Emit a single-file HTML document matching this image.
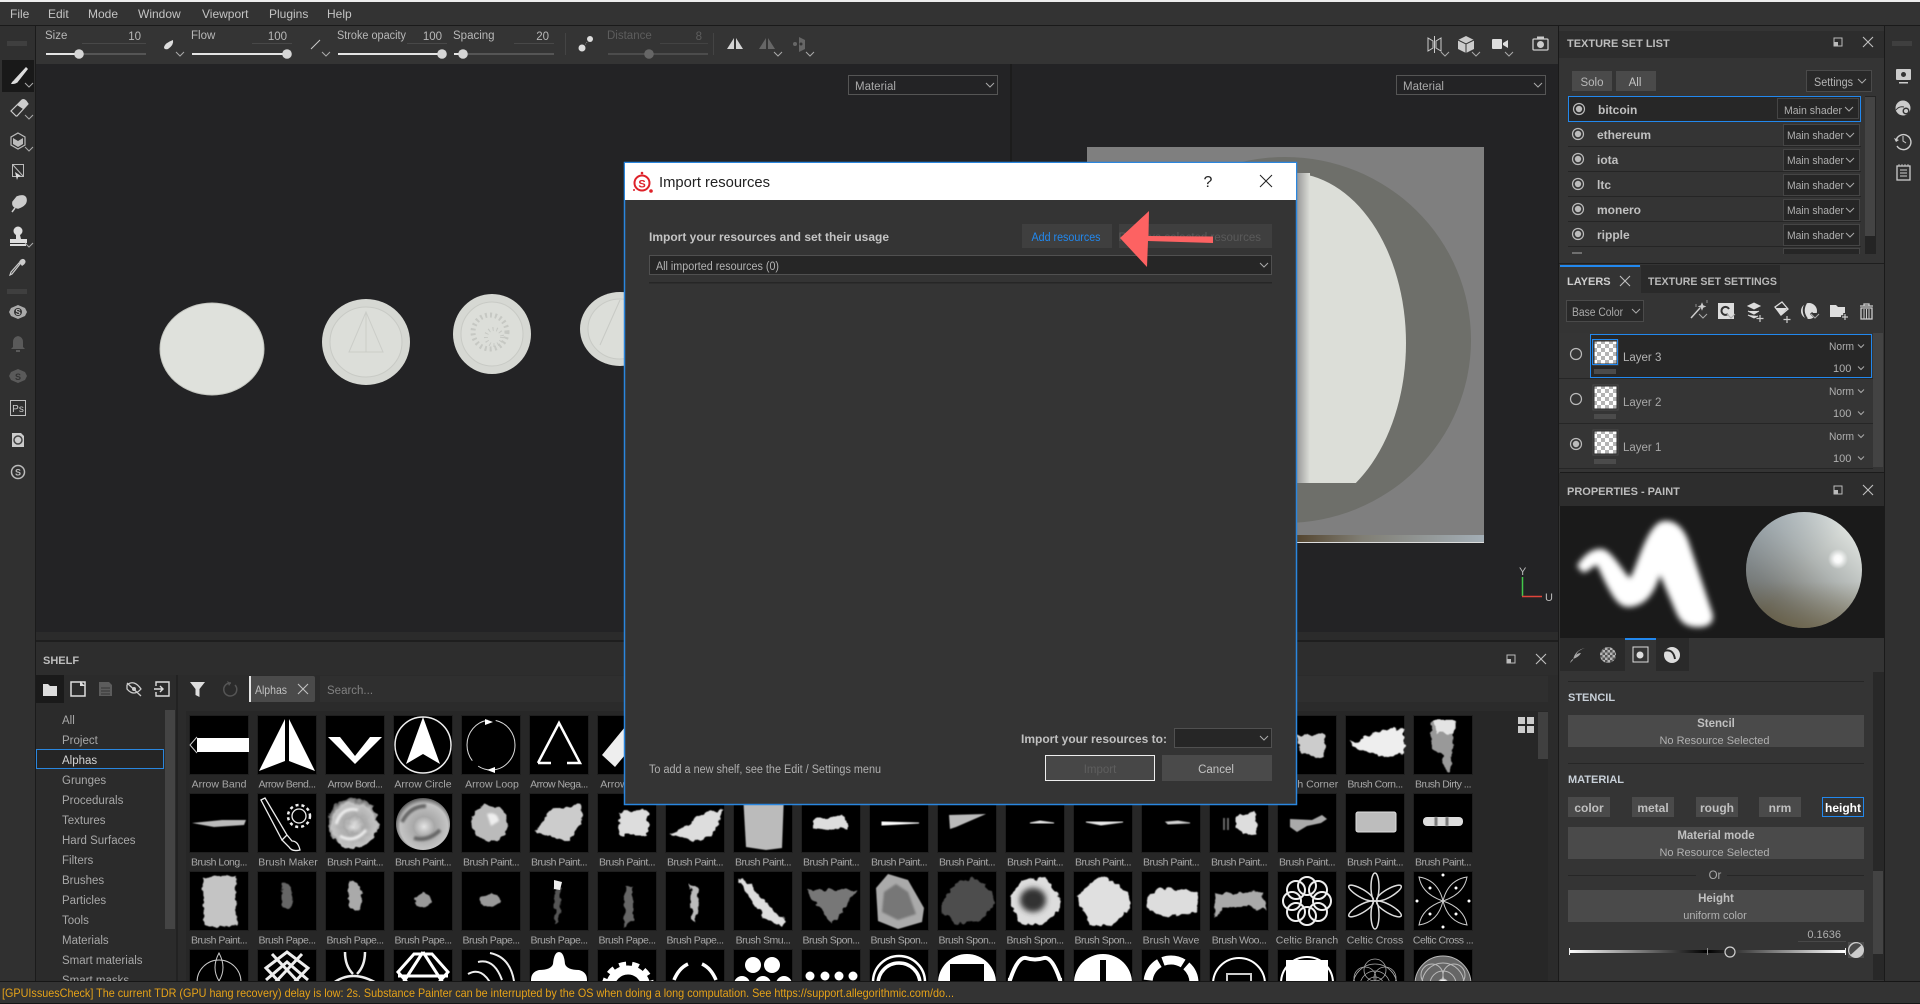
<!DOCTYPE html>
<html><head><meta charset="utf-8"><title>Import resources</title>
<style>
html,body{margin:0;padding:0;background:#232325;width:1920px;height:1004px;overflow:hidden}
svg{display:block}
text{font-family:"Liberation Sans",sans-serif;font-size:11px;fill:#b4b4b4}
.m{font-size:12px;fill:#c4c4c4}
.tb{font-size:11.5px;fill:#b8b8b8}
.h{font-size:11px;font-weight:bold;fill:#bdbdbd}
.b{font-size:12px;font-weight:bold;fill:#c0c0c0}
.l{font-size:10.5px;fill:#a8a8a8;text-anchor:middle}
.t{letter-spacing:-.5px}
.c{font-size:11.5px;fill:#a8a8a8}
.mid{text-anchor:middle}
.end{text-anchor:end}
.ms{font-size:11px;fill:#b0b0b0}
.w{fill:#fff}
</style></head><body>
<svg width="1920" height="1004" viewBox="0 0 1920 1004" xmlns="http://www.w3.org/2000/svg">
<defs>
<path id="ch" d="M-4-2L0 2L4-2" fill="none" stroke="#aaa" stroke-width="1"/>
<path id="ch2" d="M-3-1.500L0 1.500L3-1.500" fill="none" stroke="#aaa" stroke-width="1"/>
<path id="x" d="M-5-5L5 5M5-5L-5 5" fill="none" stroke="#c0c0c0" stroke-width="1.100"/>
<g id="dock"><rect x="-4" y="-4" width="8" height="8" fill="none" stroke="#bbb"/><rect x="-4" y="0" width="4" height="4" fill="#bbb"/></g>
<g id="radio"><circle r="5.500" fill="none" stroke="#bbb" stroke-width="1.200"/><circle r="3.200" fill="#bbb"/></g>
<g id="radio0"><circle r="5.500" fill="none" stroke="#bbb" stroke-width="1.200"/></g>
<g id="shader"><rect x=".5" y=".5" width="76" height="21" fill="#262626" stroke="#454545"/><text x="4" y="15" class="ms" textLength="57" lengthAdjust="spacingAndGlyphs">Main shader</text><use href="#ch" x="67" y="11"/></g>
<pattern id="chk" width="8" height="8" patternUnits="userSpaceOnUse"><rect width="8" height="8" fill="#fff"/><rect width="4" height="4" fill="#b4b4b4"/><rect x="4" y="4" width="4" height="4" fill="#b4b4b4"/></pattern>
<pattern id="chk2" width="5" height="5" patternUnits="userSpaceOnUse"><rect width="5" height="5" fill="#b5b5b5"/><rect width="2.500" height="2.500" fill="#555"/><rect x="2.500" y="2.500" width="2.500" height="2.500" fill="#555"/></pattern>
<g id="lthumb"><rect x="0" y="0" width="25" height="25" fill="#2b2b2b" stroke="#4a4a4a"/><rect x="1.500" y="1.500" width="22" height="22" fill="url(#chk)"/><rect x="1" y="29" width="22" height="5" fill="#4b4b4b"/></g>
<g id="tile"><rect x="-1" y="-1" width="60" height="60" fill="#1f1f1f" stroke="none"/><rect width="58" height="58" fill="#000" stroke="none"/></g>
<filter id="b1" x="-30%" y="-30%" width="160%" height="160%"><feGaussianBlur stdDeviation="1"/></filter>
<filter id="b3" x="-30%" y="-30%" width="160%" height="160%"><feGaussianBlur stdDeviation="3"/></filter>
<filter id="b05" x="-30%" y="-30%" width="160%" height="160%"><feGaussianBlur stdDeviation=".6"/></filter>
<filter id="r" x="-20%" y="-20%" width="140%" height="140%"><feTurbulence type="fractalNoise" baseFrequency=".14" numOctaves="2" seed="3" result="n"/><feDisplacementMap in="SourceGraphic" in2="n" scale="7" xChannelSelector="R" yChannelSelector="G"/><feGaussianBlur stdDeviation=".5"/></filter>
<linearGradient id="sph" x1=".95" y1=".1" x2=".1" y2=".95"><stop offset="0" stop-color="#e6eae6"/><stop offset=".4" stop-color="#b0b5b3"/><stop offset=".75" stop-color="#7a7c78"/><stop offset="1" stop-color="#5c5a50"/></linearGradient>
<linearGradient id="sph2" x1="0" y1="0" x2="0" y2="1"><stop offset=".6" stop-color="#6a5c38" stop-opacity="0"/><stop offset="1" stop-color="#6a5c38" stop-opacity=".55"/></linearGradient>
<linearGradient id="sph3" x1="0" y1="0" x2="1" y2="1"><stop offset="0" stop-color="#8fa0b0" stop-opacity=".55"/><stop offset=".5" stop-color="#8fa0b0" stop-opacity="0"/></linearGradient>
<radialGradient id="hl"><stop offset="0" stop-color="#fff"/><stop offset=".35" stop-color="#fff" stop-opacity=".9"/><stop offset="1" stop-color="#fff" stop-opacity="0"/></radialGradient>
<radialGradient id="blob" cx=".52" cy=".55" r=".55"><stop offset="0" stop-color="#e4e4e4"/><stop offset=".35" stop-color="#a8a8a8"/><stop offset=".8" stop-color="#c4c4c4"/><stop offset="1" stop-color="#555"/></radialGradient>
<linearGradient id="sl"><stop offset="0" stop-color="#fff"/><stop offset=".5" stop-color="#000"/><stop offset="1" stop-color="#fff"/></linearGradient>
<linearGradient id="dg"><stop offset="0" stop-color="#999"/><stop offset="1" stop-color="#dcded8"/></linearGradient>
<linearGradient id="strip"><stop offset="0" stop-color="#54452f"/><stop offset=".35" stop-color="#807e74"/><stop offset="1" stop-color="#a3aeb6"/></linearGradient>
<g id="grip"><path d="M0 0v5M2 0v5M4 0v5M6 0v5M8 0v5M10 0v5M12 0v5M14 0v5M16 0v5M18 0v5" stroke="#4e4e4e" stroke-width="1"/></g>
<clipPath id="cr"><rect x="1297" y="150" width="200" height="333"/></clipPath>
</defs>

<!-- base -->
<rect width="1920" height="1004" fill="#232325"/>
<rect width="1920" height="2" fill="#eee"/>
<rect y="2" width="1920" height="23" fill="#333"/>
<rect y="25" width="1920" height="1" fill="#1a1a1a"/>
<rect y="26" width="1920" height="38" fill="#343434"/>
<rect x="1010" y="64" width="2" height="568" fill="#1c1c1c"/>

<!-- menu -->
<text x="10" y="18" class="m">File</text><text x="48" y="18" class="m">Edit</text><text x="88" y="18" class="m">Mode</text><text x="138" y="18" class="m">Window</text><text x="202" y="18" class="m">Viewport</text><text x="269" y="18" class="m">Plugins</text><text x="327" y="18" class="m">Help</text>

<!-- toolbar sliders -->
<g>
<text x="45" y="39" class="tb">Size</text><text x="141" y="40" class="tb end">10</text><rect x="82" y="43" width="64" height="1" fill="#484848"/>
<rect x="46" y="53" width="100" height="2" fill="#555"/><rect x="46" y="53" width="33" height="2" fill="#e4e4e4"/><circle cx="79" cy="54" r="4.800" fill="#d6d6d6"/>
<path d="M173 40Q174 45 168 49Q164 50 164 47Q165 43 173 40z" fill="#ddd"/><use href="#ch" x="180" y="54"/>
<text x="191" y="39" class="tb">Flow</text><text x="287" y="40" class="tb end">100</text><rect x="252" y="43" width="40" height="1" fill="#484848"/>
<rect x="192" y="53" width="95" height="2" fill="#e4e4e4"/><circle cx="287" cy="54" r="4.800" fill="#d6d6d6"/>
<path d="M311 49l9-9" stroke="#ccc" fill="none"/><use href="#ch" x="326" y="54"/>
<text x="337" y="39" class="tb" textLength="69" lengthAdjust="spacingAndGlyphs">Stroke opacity</text><text x="442" y="40" class="tb end">100</text><rect x="407" y="43" width="40" height="1" fill="#484848"/>
<rect x="338" y="53" width="104" height="2" fill="#e4e4e4"/><circle cx="442" cy="54" r="4.800" fill="#d6d6d6"/>
<text x="453" y="39" class="tb">Spacing</text><text x="549" y="40" class="tb end">20</text><rect x="514" y="43" width="40" height="1" fill="#484848"/>
<rect x="454" y="53" width="100" height="2" fill="#555"/><rect x="454" y="53" width="9" height="2" fill="#e4e4e4"/><circle cx="463" cy="54" r="4.800" fill="#d6d6d6"/>
<rect x="565" y="33" width="1" height="22" fill="#444"/>
<circle cx="590" cy="39" r="3" fill="#ddd"/><circle cx="582" cy="48" r="3.500" fill="#ddd"/><path d="M587 42l-2 3" stroke="#888" stroke-dasharray="1 1"/>
<text x="607" y="39" class="tb" style="fill:#5d5d5d">Distance</text><text x="702" y="40" class="tb end" style="fill:#5d5d5d">8</text><rect x="660" y="43" width="48" height="1" fill="#434343"/>
<rect x="608" y="53" width="100" height="2" fill="#4c4c4c"/><circle cx="649" cy="54" r="4.800" fill="#666"/>
<rect x="713" y="33" width="1" height="22" fill="#444"/>
<path d="M734 38l-7 11h7zM736 38l7 11h-7z" fill="#d5d5d5"/>
<path d="M766 38l-7 11h7zM768 38l7 11h-7z" fill="#666"/><use href="#ch" x="778" y="54"/>
<path d="M799 37l6 3v9l-6 3z" fill="#666"/><circle cx="795" cy="44" r="2" fill="#666"/><circle cx="801" cy="44" r="1.500" fill="#333"/><use href="#ch" x="810" y="54"/>
</g>

<!-- viewport dropdowns -->
<rect x="848.500" y="75.500" width="149" height="19" fill="#232325" stroke="#555"/><text x="855" y="90" class="c" style="fill:#aaa">Material</text><use href="#ch" x="990" y="85"/>
<rect x="1396.500" y="75.500" width="149" height="19" fill="#232325" stroke="#555"/><text x="1403" y="90" class="c" style="fill:#aaa">Material</text><use href="#ch" x="1538" y="85"/>

<!-- viewport right toolbar -->
<g>
<path d="M1428 38v13l5-3V41zM1441 38v13l-5-3V41z" fill="none" stroke="#ccc"/><path d="M1434.500 36v17" stroke="#ccc"/><use href="#ch" x="1445" y="54"/>
<path d="M1466 36l8 4v9l-8 4-8-4v-9z" fill="#ccc"/><path d="M1458 40l8 4 8-4M1466 44v9" stroke="#333" fill="none"/><use href="#ch" x="1476" y="54"/>
<rect x="1492" y="39" width="10" height="10" rx="1" fill="#ddd"/><path d="M1503 43l5-3v8l-5-3z" fill="#ddd"/><use href="#ch" x="1509" y="54"/>
<rect x="1533" y="39" width="15" height="11" rx="1" fill="none" stroke="#ccc" stroke-width="1.300"/><circle cx="1540.500" cy="44.500" r="3.500" fill="#ccc"/><rect x="1537" y="36.500" width="7" height="2.500" fill="#ccc"/>
</g>

<!-- coins -->
<g>
<ellipse cx="212" cy="349" rx="52" ry="46" fill="#dfe1dc"/><ellipse cx="212" cy="349" rx="52" ry="46" fill="none" stroke="#c4c6c0"/>
<ellipse cx="366" cy="342" rx="44" ry="43" fill="#d6d8d3"/><ellipse cx="366" cy="342" rx="36" ry="35" fill="#dcded9" stroke="#c8cac5"/><path d="M366 312l-17 40h34zM366 312v40" fill="none" stroke="#cbcdc8"/>
<ellipse cx="492" cy="334" rx="39" ry="40" fill="#d6d8d3"/><ellipse cx="492" cy="334" rx="31" ry="32" fill="#dcded9" stroke="#c8cac5"/>
<ellipse cx="490" cy="332" rx="17" ry="17" fill="none" stroke="#c6c8c3" stroke-width="5" stroke-dasharray="2 3"/><ellipse cx="494" cy="337" rx="8" ry="8" fill="none" stroke="#c6c8c3" stroke-width="4" stroke-dasharray="1 3"/>
<ellipse cx="620" cy="329" rx="40" ry="37" fill="#d6d8d3"/><ellipse cx="620" cy="329" rx="32" ry="30" fill="#dcded9" stroke="#c8cac5"/><path d="M620 300l-20 45" stroke="#c8cac5" fill="none"/>
</g>

<!-- right render -->
<rect x="1087" y="147" width="397" height="396" fill="#7f7f7f"/>
<ellipse cx="1285" cy="340" rx="186" ry="183" fill="#6e6f6a"/>
<ellipse cx="1290" cy="343" rx="116" ry="170" fill="#dcded8" clip-path="url(#cr)"/>
<rect x="1297" y="173" width="13" height="310" fill="url(#dg)"/>
<rect x="1297" y="535" width="187" height="8" fill="url(#strip)"/>
<rect x="1297" y="542" width="187" height="1" fill="#ddd"/>
<!-- gizmo -->
<path d="M1522.500 577v19" stroke="#43c74a" stroke-width="1.500"/><path d="M1522 596.500h20" stroke="#e0453a" stroke-width="1.500"/>
<text x="1519" y="575" style="font-size:11px;fill:#bbb">Y</text><text x="1545" y="601" style="font-size:11px;fill:#bbb">U</text>

<!-- left toolbar -->
<rect x="0" y="26" width="35" height="955" fill="#303030"/>
<rect x="35" y="26" width="1" height="955" fill="#1b1b1b"/>
<use href="#grip" x="8" y="41"/>
<rect x="2" y="60" width="32" height="32" fill="#191919"/>
<g>
<path d="M26 67L14 80l3 3L28 69z" fill="#ddd"/><path d="M11 84q3-6 6-3q1 3-6 3z" fill="#ddd"/><use href="#ch" x="29" y="85"/>
<path d="M16 116l-5-5 11-11q2-1 4 1l2 3-11 12z" fill="none" stroke="#ccc" stroke-width="1.200"/><path d="M17 105l5-5q2-1 4 1l2 3-5 5z" fill="#ccc"/><use href="#ch" x="29" y="117"/>
<path d="M18 133l7 4v8l-7 4-7-4v-8z" fill="none" stroke="#bbb" stroke-width="1.200"/><path d="M13 138l5 3 5-3v6l-5 3-5-3z" fill="#bbb"/><use href="#ch" x="29" y="149"/>
<rect x="12.500" y="164.500" width="11" height="12" fill="none" stroke="#bbb"/><path d="M13 165l10 11" stroke="#bbb"/><path d="M15 172l6 4-3 1-1 3z" fill="#ddd"/>
<path d="M17 197q8-3 9 2q1 6-8 9q-6-1-5-6zM15 208l-3 4" fill="#ccc" stroke="#ccc" stroke-width="1.500"/>
<circle cx="18" cy="231" r="4.500" fill="#ddd"/><path d="M16 235h4l1 4h6v4H10v-4h6z" fill="#ddd"/><rect x="10" y="244" width="16" height="2" fill="#ddd"/><use href="#ch" x="29" y="245"/>
<path d="M20 264l-8 10-2 1 1-3 8-9z" fill="none" stroke="#ccc" stroke-width="1.200"/><path d="M19 262q3-5 6-2q2 3-3 6z" fill="#ccc"/>
<use href="#grip" x="8" y="289"/>
<path d="M18 305l7 3 2 4-2 4-7 3-7-3-2-4 2-4z" fill="#aaa"/><circle cx="18" cy="312" r="4" fill="#333"/><text x="18" y="315" class="mid" style="font-size:8px;font-weight:bold;fill:#bbb">S</text>
<path d="M18 336q5 1 5 6v5l2 2H11l2-2v-5q0-5 5-6z" fill="#5a5a5a"/><rect x="16" y="350" width="4" height="2" fill="#5a5a5a"/>
<path d="M18 369l7 3 2 4-2 4-7 3-7-3-2-4 2-4z" fill="#5a5a5a"/><text x="18" y="380" class="mid" style="font-size:9px;font-weight:bold;fill:#333">S</text>
<rect x="10.500" y="400.500" width="15" height="15" fill="none" stroke="#c0c0c0"/><text x="18" y="412" class="mid" style="font-size:10px;fill:#ccc">Ps</text>
<path d="M12 433h9l3 3v11H12z" fill="#ccc"/><circle cx="18" cy="440" r="4" fill="none" stroke="#444" stroke-width="1.500"/>
<circle cx="18" cy="472" r="6.500" fill="none" stroke="#bbb" stroke-width="1.500"/><text x="18" y="475.500" class="mid" style="font-size:9px;font-weight:bold;fill:#bbb">S</text>
</g>

<!-- shelf -->
<rect x="36" y="632" width="1522" height="349" fill="#2b2b2b"/>
<rect x="36" y="640" width="1522" height="2" fill="#1e1e1e"/>
<rect x="36" y="642" width="1522" height="33" fill="#2d2d2d"/>
<text x="43" y="664" class="h" style="font-size:11px">SHELF</text>
<use href="#dock" x="1511" y="659"/><use href="#x" x="1541" y="659"/>
<!-- shelf tools -->
<rect x="36" y="675" width="28" height="28" fill="#1a1a1a"/>
<path d="M43 684h5l2 2h7v10H43z" fill="#ddd"/>
<path d="M71 682h14v14H71z" fill="none" stroke="#ddd" stroke-width="1.500"/><path d="M80 681l5 5h-5z" fill="#ddd"/>
<path d="M99 682h10l3 3v11H99z" fill="#5c5c5c"/><path d="M101 688h9M101 691h9M101 694h9" stroke="#333"/>
<path d="M127 685q7-6 14 4q-7 8-14 0z" fill="none" stroke="#ccc" stroke-width="1.300"/><path d="M127 683l14 13" stroke="#ccc" stroke-width="1.300"/><circle cx="134" cy="689" r="2" fill="#ccc"/>
<path d="M156 686v-4h13v14h-13v-4" fill="none" stroke="#ddd" stroke-width="1.400"/><path d="M154 689h9M160 686l3 3-3 3" fill="none" stroke="#ddd" stroke-width="1.400"/>
<rect x="176" y="675" width="2" height="306" fill="#222"/>
<path d="M190 682h15l-5.500 7v8l-4-2v-6z" fill="#ddd"/>
<path d="M235 685a6.500 6.500 0 1 1-4-2" fill="none" stroke="#555" stroke-width="1.500"/><path d="M227 681l4 2-2 3z" fill="#555"/>
<rect x="249" y="676" width="66" height="26" rx="2" fill="#4a4a4a"/><rect x="249" y="676" width="2" height="26" fill="#e5e5e5"/>
<text x="255" y="694" class="c" style="font-size:12px;fill:#c0c0c0" textLength="32" lengthAdjust="spacingAndGlyphs">Alphas</text><use href="#x" x="303" y="689"/>
<rect x="320" y="676" width="1228" height="26" fill="#2f2f2f"/>
<text x="327" y="694" class="c" style="fill:#808080">Search...</text>
<!-- categories -->
<g>
<rect x="36.500" y="749.500" width="127" height="19" fill="#252525" stroke="#2a86de"/>
<text x="62" y="724" class="c">All</text><text x="62" y="744" class="c">Project</text><text x="62" y="764" class="c" style="fill:#d4d4d4">Alphas</text><text x="62" y="784" class="c">Grunges</text><text x="62" y="804" class="c">Procedurals</text><text x="62" y="824" class="c">Textures</text><text x="62" y="844" class="c">Hard Surfaces</text><text x="62" y="864" class="c">Filters</text><text x="62" y="884" class="c">Brushes</text><text x="62" y="904" class="c">Particles</text><text x="62" y="924" class="c">Tools</text><text x="62" y="944" class="c">Materials</text><text x="62" y="964" class="c">Smart materials</text><text x="62" y="984" class="c">Smart masks</text>
</g>
<rect x="165" y="710" width="10" height="219" fill="#444"/>
<rect x="186" y="711" width="1362" height="270" fill="#272727"/>
<rect x="1538" y="712" width="10" height="47" fill="#404040"/>
<path d="M1518 717h7v7h-7zM1527 717h7v7h-7zM1518 726h7v7h-7zM1527 726h7v7h-7z" fill="#ccc"/>

<!-- thumbs row 0 -->
<g transform="translate(190,716)"><use href="#tile"/><rect x="7" y="22" width="52" height="14" class="w"/><path d="M7 21l-7 8 7 8" fill="none" stroke="#ccc"/></g>
<g transform="translate(258,716)"><use href="#tile"/><path d="M27 3L1 55l26-10zM31 3l26 52-26-10z" class="w"/></g>
<g transform="translate(326,716)"><use href="#tile"/><path d="M2 21h12l15 19 15-19h12L29 48z" class="w"/></g>
<g transform="translate(394,716)"><use href="#tile"/><ellipse cx="29" cy="29" rx="28" ry="28" fill="none" stroke="#eee" stroke-width="1.500"/><path d="M29 1L12 48l17-10 17 10z" class="w"/></g>
<g transform="translate(462,716)"><use href="#tile"/><ellipse cx="29" cy="29" rx="24" ry="25" fill="none" stroke="#ddd" stroke-dasharray="52 8"/><path d="M23 3l8 3-8 3zM33 51l-8 3 8 3z" class="w"/></g>
<g transform="translate(530,716)"><use href="#tile"/><path d="M8 47L29 7l21 40H37" fill="none" stroke="#fff" stroke-width="2.500"/><path d="M21 47H8" stroke="#fff" stroke-width="2.500"/></g>
<g transform="translate(598,716)"><use href="#tile"/><path d="M4 39l23-28v28l-10 12z" fill="#eee"/></g>
<g transform="translate(1278,716)"><use href="#tile"/><path d="M19 19l29 0-1 20-6 3-18-4z" fill="#ccc" filter="url(#r)"/></g>
<g transform="translate(1346,716)"><use href="#tile"/><path d="M2 26l12-1 6-5 18-6 20-1v25l-14 1-12 2-8-4-8-3-6-3z" fill="#eee" filter="url(#r)"/></g>
<g transform="translate(1414,716)"><use href="#tile"/><path d="M17 4h25l-3 16-1 14-2 22h-3l-5-16-10-8-1-12z" fill="#999" filter="url(#r)"/><path d="M18 4h23l-2 14-15-1z" fill="#e4e4e4" filter="url(#r)"/></g>
<g>
<text x="219" y="787.500" class="l">Arrow Band</text><text x="287" y="787.500" class="l t">Arrow Bend...</text><text x="355" y="787.500" class="l t">Arrow Bord...</text><text x="423" y="787.500" class="l">Arrow Circle</text><text x="492" y="787.500" class="l">Arrow Loop</text><text x="559" y="787.500" class="l t">Arrow Nega...</text><text x="614" y="787.500" class="l">Arrow</text><text x="1307" y="787.500" class="l">Brush Corner</text><text x="1375" y="787.500" class="l t">Brush Corn...</text><text x="1443" y="787.500" class="l t">Brush Dirty ...</text>
</g>

<!-- thumbs row 1 -->
<g transform="translate(190,794)"><use href="#tile"/><path d="M2 29l30-3 24 0-2 5-30 2z" fill="#bbb" filter="url(#b05)"/></g>
<g transform="translate(258,794)"><use href="#tile"/><path d="M3 6l4-2 22 37-5 5zM24 46l5-5 5 6q6 0 8 9q-8 2-11-3z" fill="none" stroke="#eee" stroke-width="1.300"/><circle cx="41" cy="22" r="7" fill="none" stroke="#eee" stroke-width="1.300"/><circle cx="41" cy="22" r="11" fill="none" stroke="#eee" stroke-width="2.500" stroke-dasharray="3 3"/></g>
<g transform="translate(326,794)"><use href="#tile"/><ellipse cx="27" cy="29" rx="25" ry="25" fill="url(#blob)" filter="url(#r)"/><path d="M10 30q6-18 22-14M14 42q14 8 26-6" fill="none" stroke="#eee" stroke-width="3" filter="url(#b1)"/></g>
<g transform="translate(394,794)"><use href="#tile"/><ellipse cx="29" cy="30" rx="27" ry="26" fill="url(#blob)"/><path d="M8 28q8-16 24-16M20 44q14 4 26-8" fill="none" stroke="#666" stroke-width="4" filter="url(#b1)"/></g>
<g transform="translate(462,794)"><use href="#tile"/><ellipse cx="28" cy="29" rx="18" ry="18" fill="#bbb" filter="url(#r)"/><path d="M25 20q10-3 12 7l-8 5z" fill="#eee" filter="url(#b1)"/></g>
<g transform="translate(530,794)"><use href="#tile"/><path d="M5 38L22 15l28-4 3 14-14 22z" fill="#ccc" filter="url(#r)"/></g>
<g transform="translate(598,794)"><use href="#tile"/><path d="M22 18l28-2v25H20z" fill="#ddd" filter="url(#r)"/></g>
<g transform="translate(666,794)"><use href="#tile"/><path d="M4 41L36 21l22-7-11 27-19 6z" fill="#ddd" filter="url(#r)"/></g>
<g transform="translate(734,794)"><use href="#tile"/><path d="M9 0h41l-2 54-16 2-20-3z" fill="#bbb" filter="url(#b05)"/></g>
<g transform="translate(802,794)"><use href="#tile"/><path d="M12 24l20 0 8-3 6 6v7l-20 2-14-2z" fill="#ddd" filter="url(#r)"/></g>
<g transform="translate(870,794)"><use href="#tile"/><path d="M12 28l37 1-37 2z" class="w" stroke="#fff" filter="url(#b05)"/></g>
<g transform="translate(938,794)"><use href="#tile"/><path d="M11 21l37-1-30 13-6 2z" fill="#bbb" filter="url(#b05)"/></g>
<g transform="translate(1006,794)"><use href="#tile"/><path d="M24 29l10-2 14 2z" fill="#eee" stroke="#ddd" filter="url(#b05)"/></g>
<g transform="translate(1074,794)"><use href="#tile"/><path d="M12 28h37l-22 3z" fill="#eee" stroke="#ddd" filter="url(#b05)"/></g>
<g transform="translate(1142,794)"><use href="#tile"/><path d="M24 28l12-1 12 2-22 1z" fill="#ddd" stroke="#bbb" filter="url(#b05)"/></g>
<g transform="translate(1210,794)"><use href="#tile"/><path d="M26 22l20-3 2 20-16 1-6-8z" fill="#ddd" filter="url(#r)"/><path d="M14 24v12M18 24v12" stroke="#666" stroke-width="2" filter="url(#b05)"/></g>
<g transform="translate(1278,794)"><use href="#tile"/><path d="M12 25l22 1 10-5 5 4-6 4-14 3-10 6-7-5z" fill="#aaa" filter="url(#b05)"/></g>
<g transform="translate(1346,794)"><use href="#tile"/><rect x="10" y="18" width="40" height="20" rx="2" fill="#bdbdbd" stroke="#ddd"/></g>
<g transform="translate(1414,794)"><use href="#tile"/><rect x="9" y="23" width="40" height="9" rx="4" fill="#ddd"/><path d="M22 23v9M33 23v9" stroke="#777" stroke-width="3" filter="url(#b05)"/></g>
<g>
<text x="219" y="865.500" class="l t">Brush Long...</text><text x="288" y="865.500" class="l">Brush Maker</text><text x="355" y="865.500" class="l t">Brush Paint...</text><text x="423" y="865.500" class="l t">Brush Paint...</text><text x="491" y="865.500" class="l t">Brush Paint...</text><text x="559" y="865.500" class="l t">Brush Paint...</text><text x="627" y="865.500" class="l t">Brush Paint...</text><text x="695" y="865.500" class="l t">Brush Paint...</text><text x="763" y="865.500" class="l t">Brush Paint...</text><text x="831" y="865.500" class="l t">Brush Paint...</text><text x="899" y="865.500" class="l t">Brush Paint...</text><text x="967" y="865.500" class="l t">Brush Paint...</text><text x="1035" y="865.500" class="l t">Brush Paint...</text><text x="1103" y="865.500" class="l t">Brush Paint...</text><text x="1171" y="865.500" class="l t">Brush Paint...</text><text x="1239" y="865.500" class="l t">Brush Paint...</text><text x="1307" y="865.500" class="l t">Brush Paint...</text><text x="1375" y="865.500" class="l t">Brush Paint...</text><text x="1443" y="865.500" class="l t">Brush Paint...</text>
</g>

<!-- thumbs row 2 -->
<g transform="translate(190,872)"><use href="#tile"/><path d="M13 5l33-2 1 50-20 2-13-3z" fill="#c4c4c4" filter="url(#r)"/></g>
<g transform="translate(258,872)"><use href="#tile"/><ellipse cx="29" cy="24" rx="6" ry="14" fill="#666" filter="url(#r)"/></g>
<g transform="translate(326,872)"><use href="#tile"/><ellipse cx="29" cy="24" rx="7" ry="16" fill="#aaa" filter="url(#r)"/></g>
<g transform="translate(394,872)"><use href="#tile"/><ellipse cx="29" cy="28" rx="8" ry="7" fill="#999" filter="url(#r)"/></g>
<g transform="translate(462,872)"><use href="#tile"/><ellipse cx="28" cy="28" rx="10" ry="6" fill="#999" filter="url(#r)"/></g>
<g transform="translate(530,872)"><use href="#tile"/><path d="M24 16l8 0-3 34h-5z" fill="#555" filter="url(#r)"/><path d="M24 8l8 2-2 8-6-1z" fill="#eee"/></g>
<g transform="translate(598,872)"><use href="#tile"/><path d="M27 14l8 0 0 35-10 6z" fill="#666" filter="url(#r)"/></g>
<g transform="translate(666,872)"><use href="#tile"/><path d="M24 13l10 3-4 35-5-5z" fill="#bbb" filter="url(#r)"/></g>
<g transform="translate(734,872)"><use href="#tile"/><path d="M5 6l12 8 25 27 11 8-6 5-17-8-13-18z" fill="#ddd" filter="url(#r)"/></g>
<g transform="translate(802,872)"><use href="#tile"/><path d="M4 18h52L30 52z" fill="#777" filter="url(#r)"/></g>
<g transform="translate(870,872)"><use href="#tile"/><path d="M6 16l12-14 20 6 16 28-2 14-24 7-20-8z" fill="#aaa" filter="url(#b05)"/><path d="M14 20l12-8 12 8 8 22-18 6-16-8z" fill="#777" filter="url(#b1)"/></g>
<g transform="translate(938,872)"><use href="#tile"/><path d="M4 30l12-16 18-9 20 14 2 14-14 16-24 2-14-10z" fill="#4e4e4e" filter="url(#r)"/></g>
<g transform="translate(1006,872)"><use href="#tile"/><path d="M3 26L16 9l22-4 16 20-2 14-16 14-24-3z" fill="#ddd" filter="url(#r)"/><ellipse cx="27" cy="28" rx="13" ry="12" fill="#333" filter="url(#b3)"/></g>
<g transform="translate(1074,872)"><use href="#tile"/><path d="M2 26L14 14l16-10 24 16 2 16-18 18-22-2z" fill="#e0e0e0" filter="url(#r)"/></g>
<g transform="translate(1142,872)"><use href="#tile"/><path d="M4 26l14-10 38 4-2 20-32 5-16-8z" fill="#ddd" filter="url(#r)"/></g>
<g transform="translate(1210,872)"><use href="#tile"/><path d="M4 22l48-2 4 18-20-4-24 2-6 10z" fill="#aaa" filter="url(#r)"/></g>
<g transform="translate(1278,872)"><use href="#tile"/><g fill="none" stroke="#eee" stroke-width="2"><circle cx="29" cy="14" r="9"/><circle cx="29" cy="44" r="9"/><circle cx="14" cy="29" r="9"/><circle cx="44" cy="29" r="9"/><circle cx="18" cy="18" r="9"/><circle cx="40" cy="18" r="9"/><circle cx="18" cy="40" r="9"/><circle cx="40" cy="40" r="9"/></g></g>
<g transform="translate(1346,872)"><use href="#tile"/><g fill="none" stroke="#ddd" stroke-width="1.500"><ellipse cx="29" cy="15" rx="4" ry="14"/><ellipse cx="29" cy="43" rx="4" ry="14"/><ellipse cx="15" cy="21" rx="4" ry="14" transform="rotate(-60 15 21)"/><ellipse cx="43" cy="21" rx="4" ry="14" transform="rotate(60 43 21)"/><ellipse cx="15" cy="37" rx="4" ry="14" transform="rotate(60 15 37)"/><ellipse cx="43" cy="37" rx="4" ry="14" transform="rotate(-60 43 37)"/></g></g>
<g transform="translate(1414,872)"><use href="#tile"/><path d="M29 29Q8 22 5 5Q24 8 29 29Q34 8 53 5Q50 22 29 29Q50 36 53 53Q34 50 29 29Q24 50 5 53Q8 36 29 29z" fill="none" stroke="#ccc"/><g fill="#fff"><circle cx="29" cy="3" r="1.500"/><circle cx="29" cy="55" r="1.500"/><circle cx="3" cy="29" r="1.500"/><circle cx="55" cy="29" r="1.500"/><circle cx="16" cy="16" r="1.500"/><circle cx="42" cy="16" r="1.500"/><circle cx="16" cy="42" r="1.500"/><circle cx="42" cy="42" r="1.500"/></g></g>
<g>
<text x="219" y="943.500" class="l t">Brush Paint...</text><text x="287" y="943.500" class="l t">Brush Pape...</text><text x="355" y="943.500" class="l t">Brush Pape...</text><text x="423" y="943.500" class="l t">Brush Pape...</text><text x="491" y="943.500" class="l t">Brush Pape...</text><text x="559" y="943.500" class="l t">Brush Pape...</text><text x="627" y="943.500" class="l t">Brush Pape...</text><text x="695" y="943.500" class="l t">Brush Pape...</text><text x="763" y="943.500" class="l t">Brush Smu...</text><text x="831" y="943.500" class="l t">Brush Spon...</text><text x="899" y="943.500" class="l t">Brush Spon...</text><text x="967" y="943.500" class="l t">Brush Spon...</text><text x="1035" y="943.500" class="l t">Brush Spon...</text><text x="1103" y="943.500" class="l t">Brush Spon...</text><text x="1171" y="943.500" class="l">Brush Wave</text><text x="1239" y="943.500" class="l t">Brush Woo...</text><text x="1307" y="943.500" class="l">Celtic Branch</text><text x="1375" y="943.500" class="l">Celtic Cross</text><text x="1443" y="943.500" class="l t">Celtic Cross ...</text>
</g>

<!-- thumbs row 3 -->
<g transform="translate(190,950)"><use href="#tile"/><circle cx="29" cy="32" r="22" fill="none" stroke="#ccc"/><path d="M29 3q-8 15 0 28q8-13 0-28z" fill="none" stroke="#ccc"/></g>
<g transform="translate(258,950)"><use href="#tile"/><path d="M8 18L29 2l21 16L29 40zM8 30L29 12l21 18M14 4l32 34M44 4L12 38" fill="none" stroke="#eee" stroke-width="3"/></g>
<g transform="translate(326,950)"><use href="#tile"/><path d="M19 2q0 14 8 22M39 2q0 14-8 22M6 34q20-16 46 0" fill="none" stroke="#eee" stroke-width="2.500"/></g>
<g transform="translate(394,950)"><use href="#tile"/><path d="M4 22l16-18 18 0 16 18-14 16-22 0zM29 2l-22 34M29 2l22 34M4 26h50" fill="none" stroke="#fff" stroke-width="3"/></g>
<g transform="translate(462,950)"><use href="#tile"/><path d="M28 3q20 4 24 28M16 12q16-4 24 18M6 24q14-8 24 12M4 36l22 2" fill="none" stroke="#eee" stroke-width="2"/></g>
<g transform="translate(530,950)"><use href="#tile"/><path d="M29 2q5 0 6 12q2 6 14 6q8 2 8 10v8H1v-8q0-8 8-10q12 0 14-6q1-12 6-12z" fill="#fff"/></g>
<g transform="translate(598,950)"><use href="#tile"/><circle cx="30" cy="38" r="18" fill="none" stroke="#fff" stroke-width="9"/><circle cx="30" cy="38" r="24" fill="none" stroke="#fff" stroke-width="5" stroke-dasharray="7 6"/></g>
<g transform="translate(666,950)"><use href="#tile"/><path d="M8 30q5-12 14-16M50 30q-5-12-14-16" fill="none" stroke="#fff" stroke-width="3.500"/></g>
<g transform="translate(734,950)"><use href="#tile"/><g fill="#fff"><circle cx="19" cy="15" r="8"/><circle cx="38" cy="15" r="8"/><circle cx="8" cy="34" r="8"/><circle cx="29" cy="34" r="8"/><circle cx="50" cy="34" r="8"/></g></g>
<g transform="translate(802,950)"><use href="#tile"/><g fill="#fff"><circle cx="8" cy="26" r="4.500"/><circle cx="23" cy="26" r="4.500"/><circle cx="37" cy="26" r="4.500"/><circle cx="51" cy="26" r="4.500"/><circle cx="16" cy="38" r="3.500"/><circle cx="30" cy="38" r="3.500"/><circle cx="44" cy="38" r="3.500"/></g></g>
<g transform="translate(870,950)"><use href="#tile"/><circle cx="29" cy="32" r="26" fill="none" stroke="#fff" stroke-width="2.500"/><circle cx="29" cy="34" r="21" fill="none" stroke="#fff" stroke-width="3.500"/></g>
<g transform="translate(938,950)"><use href="#tile"/><circle cx="29" cy="33" r="29" class="w"/><rect x="12" y="14" width="34" height="44" fill="#000"/></g>
<g transform="translate(1006,950)"><use href="#tile"/><path d="M4 30Q12 6 20 8q9 3 18 0Q46 6 54 30" fill="none" stroke="#fff" stroke-width="4"/><path d="M4 28L2 58" stroke="#fff" stroke-width="4"/><path d="M54 28l2 30" stroke="#fff" stroke-width="4"/></g>
<g transform="translate(1074,950)"><use href="#tile"/><circle cx="29" cy="33" r="29" class="w"/><rect x="26" y="10" width="6" height="30" fill="#000"/></g>
<g transform="translate(1142,950)"><use href="#tile"/><circle cx="29" cy="33" r="23" fill="none" stroke="#fff" stroke-width="9" stroke-dasharray="21 4"/></g>
<g transform="translate(1210,950)"><use href="#tile"/><circle cx="29" cy="34" r="26" fill="none" stroke="#fff" stroke-width="2"/><rect x="17" y="24" width="24" height="24" fill="none" stroke="#ccc" stroke-width="2"/></g>
<g transform="translate(1278,950)"><use href="#tile"/><circle cx="29" cy="33" r="26" fill="none" stroke="#fff" stroke-width="2"/><rect x="8" y="10" width="42" height="24" class="w"/></g>
<g transform="translate(1346,950)"><use href="#tile"/><g fill="none" stroke="#aaa" stroke-width=".8"><circle cx="29" cy="36" r="22"/><circle cx="29" cy="36" r="15"/><circle cx="29" cy="36" r="9"/><circle cx="19" cy="28" r="11"/><circle cx="39" cy="28" r="11"/><circle cx="29" cy="20" r="11"/><circle cx="29" cy="36" r="3" fill="#eee"/></g></g>
<g transform="translate(1414,950)"><use href="#tile"/><g fill="none" stroke="#bbb"><circle cx="29" cy="34" r="28" fill="#666"/><circle cx="29" cy="34" r="21"/><circle cx="29" cy="34" r="13"/><circle cx="18" cy="25" r="11"/><circle cx="40" cy="25" r="11"/><circle cx="29" cy="34" r="5" fill="#eee"/></g></g>

<!-- right panel -->
<rect x="1558" y="26" width="1" height="955" fill="#1a1a1a"/>
<rect x="1559" y="26" width="325" height="955" fill="#343434"/>
<rect x="1884" y="26" width="1" height="955" fill="#1a1a1a"/>
<rect x="1885" y="26" width="35" height="955" fill="#303030"/>
<rect x="1559" y="31" width="325" height="27" fill="#2d2d2d"/>
<text x="1567" y="47" class="h">TEXTURE SET LIST</text>
<use href="#dock" x="1838" y="42"/><use href="#x" x="1868" y="42"/>
<rect x="1572" y="71" width="40" height="20" fill="#4a4a4a"/><text x="1592" y="86" class="c mid" style="fill:#b8b8b8">Solo</text>
<rect x="1616" y="71" width="40" height="20" fill="#4a4a4a"/><text x="1635" y="86" class="c mid" style="fill:#c4c4c4">All</text>
<rect x="1806.500" y="70.500" width="65" height="21" fill="#292929" stroke="#4a4a4a"/><text x="1814" y="86" class="c" style="fill:#b4b4b4" textLength="39" lengthAdjust="spacingAndGlyphs">Settings</text><use href="#ch" x="1862" y="81"/>
<rect x="1865" y="96" width="11" height="158" fill="#242424"/><rect x="1865" y="97" width="10" height="139" fill="#444"/>
<!-- texture list -->
<g>
<path d="M1568 146.500h293M1568 171.500h293M1568 196.500h293M1568 221.500h293M1568 246.500h293" stroke="#252525"/>
<rect x="1568.500" y="96.500" width="292" height="25" fill="#272727" stroke="#2288ee"/>
<use href="#radio" x="1579" y="109"/><text x="1598" y="114" class="b">bitcoin</text>
<rect x="1777.500" y="98.500" width="81" height="20" fill="#262626" stroke="#454545"/><text x="1784" y="114" class="ms" textLength="58" lengthAdjust="spacingAndGlyphs">Main shader</text><use href="#ch" x="1849" y="109"/>
<use href="#radio" x="1578" y="134"/><text x="1597" y="139" class="b">ethereum</text><use href="#shader" x="1783" y="124"/>
<use href="#radio" x="1578" y="159"/><text x="1597" y="164" class="b">iota</text><use href="#shader" x="1783" y="149"/>
<use href="#radio" x="1578" y="184"/><text x="1597" y="189" class="b">ltc</text><use href="#shader" x="1783" y="174"/>
<use href="#radio" x="1578" y="209"/><text x="1597" y="214" class="b">monero</text><use href="#shader" x="1783" y="199"/>
<use href="#radio" x="1578" y="234"/><text x="1597" y="239" class="b">ripple</text><use href="#shader" x="1783" y="224"/>
<rect x="1783.500" y="248.500" width="76" height="6" fill="#262626" stroke="#454545"/><path d="M1572 253h10" stroke="#aaa"/>
<rect x="1559" y="254" width="325" height="9" fill="#343434"/>
</g>
<!-- layers -->
<rect x="1559" y="263" width="325" height="1" fill="#1e1e1e"/>
<rect x="1560" y="265" width="80" height="2" fill="#2288ee"/>
<rect x="1641" y="265" width="139" height="28" fill="#2a2a2a"/>
<text x="1567" y="285" class="h" style="fill:#cfcfcf">LAYERS</text><use href="#x" x="1625" y="281"/>
<text x="1648" y="285" class="h" style="fill:#b8b8b8" textLength="129" lengthAdjust="spacingAndGlyphs">TEXTURE SET SETTINGS</text>
<rect x="1566.500" y="300.500" width="77" height="21" fill="#292929" stroke="#4a4a4a"/><text x="1572" y="316" class="c" style="fill:#aaa" textLength="51" lengthAdjust="spacingAndGlyphs">Base Color</text><use href="#ch" x="1636" y="311"/>
<g>
<path d="M1691 318l9-10" stroke="#ccc" stroke-width="1.500"/><path d="M1702 303l1 2.500 2.500 1-2.500 1-1 2.500-1-2.500-2.500-1 2.500-1zM1696 304v3M1707 300v3" fill="#ccc" stroke="#ccc" stroke-width=".6"/><use href="#ch" x="1703" y="316"/>
<rect x="1718" y="303" width="16" height="16" fill="#ddd"/><path d="M1729 309a4 4 0 1 0-1 5" fill="none" stroke="#333" stroke-width="2"/><use href="#ch" x="1731" y="316"/>
<path d="M1748 306l6-3 6 3-6 3zM1748 311l6 3 5-3M1748 315l6 3 4-2" fill="#ddd" stroke="#ddd"/><path d="M1760 315v7M1756.500 318.500h7" stroke="#ccc" stroke-width="1.200"/>
<path d="M1775 307l7-5 6 7-7 6z" fill="none" stroke="#ddd" stroke-width="1.300"/><path d="M1775.500 308h12l-6.500 7z" fill="#ddd"/><path d="M1787 316v7M1783.500 319.500h7" stroke="#ccc" stroke-width="1.200"/>
<circle cx="1809" cy="311" r="8" fill="#ddd"/><path d="M1806 303q-5 8 1 16" fill="none" stroke="#343434" stroke-width="2"/><path d="M1811 313l4 4 4-4" fill="#343434" stroke="#343434" stroke-width="3"/><use href="#ch" x="1815" y="316"/>
<path d="M1830 305h6l2 2h7v10h-15z" fill="#ddd"/><path d="M1845 313v8M1841 317h8" stroke="#343434" stroke-width="3.500"/><path d="M1845 314v6M1842 317h6" stroke="#ccc" stroke-width="1.200"/>
<path d="M1860 306h13M1864 306v-2h5v2" fill="none" stroke="#ccc" stroke-width="1.300"/><path d="M1861 308h11v11h-11z" fill="none" stroke="#ccc" stroke-width="1.300"/><path d="M1864 309v10M1866.500 309v10M1869 309v10" stroke="#ccc"/>
</g>
<!-- layers list -->
<rect x="1559" y="333" width="314" height="135" fill="#353535"/>
<path d="M1559 378.500h314M1559 423.500h314M1559 468.500h314" stroke="#262626"/>
<rect x="1590.500" y="334.500" width="281" height="43" fill="#272727" stroke="#2288ee"/>
<rect x="1873" y="333" width="10" height="134" fill="#434343"/>
<g transform="translate(1576,354)"><use href="#radio0"/></g>
<g transform="translate(1576,399)"><use href="#radio0"/></g>
<g transform="translate(1576,444)"><use href="#radio"/></g>
<g transform="translate(1593,340)"><use href="#lthumb"/></g><rect x="1592.500" y="339.500" width="25" height="25" fill="none" stroke="#2288ee"/>
<g transform="translate(1593,385)"><use href="#lthumb"/></g>
<g transform="translate(1593,430)"><use href="#lthumb"/></g>
<text x="1623" y="361" class="c" style="fill:#b4b4b4">Layer 3</text><text x="1623" y="406" class="c">Layer 2</text><text x="1623" y="451" class="c">Layer 1</text>
<text x="1829" y="350" class="ms" textLength="25" lengthAdjust="spacingAndGlyphs">Norm</text><text x="1833" y="372" class="ms">100</text><use href="#ch2" x="1861" y="346"/><use href="#ch2" x="1861" y="368"/>
<text x="1829" y="395" class="ms" textLength="25" lengthAdjust="spacingAndGlyphs">Norm</text><text x="1833" y="417" class="ms">100</text><use href="#ch2" x="1861" y="391"/><use href="#ch2" x="1861" y="413"/>
<text x="1829" y="440" class="ms" textLength="25" lengthAdjust="spacingAndGlyphs">Norm</text><text x="1833" y="462" class="ms">100</text><use href="#ch2" x="1861" y="436"/><use href="#ch2" x="1861" y="458"/>
<!-- properties -->
<rect x="1560" y="472" width="324" height="1" fill="#1b1b1b"/>
<rect x="1559" y="473" width="325" height="33" fill="#2d2d2d"/>
<text x="1567" y="495" class="h">PROPERTIES - PAINT</text>
<use href="#dock" x="1838" y="490"/><use href="#x" x="1868" y="490"/>
<rect x="1560" y="506" width="324" height="132" fill="#1a1a1a"/>
<path d="M1577 566C1583 556 1592 548 1602 549C1612 550 1625 575 1630 578C1636 570 1645 530 1660 522C1672 518 1682 525 1688 540L1712 612C1716 624 1706 628 1695 627C1685 626 1680 622 1675 610L1660 575C1655 590 1648 605 1630 607C1618 608 1612 595 1605 582L1597 565C1592 566 1587 574 1582 572Z" fill="#fff" filter="url(#b3)"/>
<circle cx="1804" cy="570" r="58" fill="url(#sph)"/>
<circle cx="1804" cy="570" r="58" fill="url(#sph2)"/>
<circle cx="1804" cy="570" r="58" fill="url(#sph3)"/>
<circle cx="1838" cy="559" r="10" fill="url(#hl)"/>
<!-- prop tabs -->
<rect x="1560" y="638" width="65" height="33" fill="#2a2a2a"/>
<rect x="1656" y="638" width="33" height="33" fill="#2a2a2a"/>
<rect x="1625" y="638" width="31" height="2" fill="#2288ee"/>
<path d="M1585 648q-10 2-12 12l-3 3q1-3 3-4q6-2 8-6q-3 0-5 2q2-5 9-7z" fill="#aaa"/>
<circle cx="1608" cy="655" r="8" fill="url(#chk2)"/>
<rect x="1633" y="647" width="15" height="15" fill="none" stroke="#ddd"/><circle cx="1640" cy="655" r="3.500" fill="#ddd"/>
<circle cx="1672" cy="655" r="8" fill="#ddd"/><path d="M1664 651q9-3 11 8" fill="none" stroke="#2a2a2a" stroke-width="2"/>
<!-- properties body -->
<rect x="1873" y="672" width="11" height="308" fill="#282828"/>
<rect x="1873" y="871" width="10" height="83" fill="#434343"/>
<path d="M1568 681.500h296M1568 763.500h296M1568 875.500h128M1727 875.500h137" stroke="#262626"/>
<text x="1568" y="701" class="h" style="fill:#c8d0d8">STENCIL</text>
<rect x="1568" y="715" width="296" height="32" fill="#4a4a4a"/>
<text x="1716" y="727" class="b mid" style="font-size:11.500px">Stencil</text><text x="1714.500" y="744" class="c mid" style="font-size:11px;fill:#b0b0b0">No Resource Selected</text>
<text x="1568" y="783" class="h" style="fill:#c8d0d8">MATERIAL</text>
<rect x="1568" y="797" width="42" height="20" fill="#4a4a4a"/><text x="1589" y="812" class="b mid">color</text>
<rect x="1632" y="797" width="42" height="20" fill="#4a4a4a"/><text x="1653" y="812" class="b mid">metal</text>
<rect x="1696" y="797" width="42" height="20" fill="#4a4a4a"/><text x="1717" y="812" class="b mid">rough</text>
<rect x="1759" y="797" width="42" height="20" fill="#4a4a4a"/><text x="1780" y="812" class="b mid">nrm</text>
<rect x="1822.500" y="797.500" width="41" height="19" fill="#333" stroke="#2288ee"/><text x="1843" y="812" class="b mid" style="fill:#fff">height</text>
<rect x="1568" y="827" width="296" height="32" fill="#4a4a4a"/>
<text x="1716" y="839" class="b mid" style="font-size:11.500px">Material mode</text><text x="1714.500" y="856" class="c mid" style="font-size:11px;fill:#b0b0b0">No Resource Selected</text>
<text x="1715" y="879" class="c mid">Or</text>
<rect x="1568" y="890" width="296" height="32" fill="#4a4a4a"/>
<text x="1716" y="902" class="b mid" style="font-size:11.500px">Height</text><text x="1715" y="919" class="c mid" style="font-size:11px;fill:#b0b0b0">uniform color</text>
<text x="1841" y="938" class="ms end">0.1636</text><rect x="1798" y="941" width="48" height="1" fill="#484848"/>
<rect x="1569" y="950" width="276" height="3" fill="url(#sl)"/>
<rect x="1569" y="948" width="1" height="7" fill="#eee"/><rect x="1845" y="948" width="1" height="7" fill="#eee"/><rect x="1707" y="948" width="1" height="7" fill="#888"/>
<circle cx="1730" cy="952" r="5" fill="#333" stroke="#d0d0d0" stroke-width="1.200"/>
<rect x="1848" y="942" width="16" height="16" fill="#4a4a4a"/><circle cx="1856" cy="950" r="7.500" fill="#ccc"/><path d="M1850.500 955A7.500 7.500 0 0 1 1861.500 945z" fill="#4a4a4a"/><circle cx="1856" cy="950" r="7.500" fill="none" stroke="#ccc"/>

<!-- right toolbar icons -->
<use href="#grip" x="1893" y="41"/>
<g>
<rect x="1896" y="69" width="15" height="11" rx="1" fill="#ccc"/><rect x="1899" y="82" width="9" height="1.500" fill="#ccc"/><circle cx="1903.500" cy="74.500" r="2.500" fill="#333"/>
<circle cx="1903" cy="108" r="7.500" fill="#ccc"/><path d="M1896 110q3-4 8-3" fill="none" stroke="#333"/><circle cx="1906" cy="111" r="3.500" fill="#333"/><circle cx="1906" cy="111" r="2" fill="#ccc"/>
<path d="M1897 146a7.500 7.500 0 1 0-1-5" fill="none" stroke="#ccc" stroke-width="1.400"/><path d="M1903 136v5l3 2" fill="none" stroke="#ccc"/><path d="M1894 138l2 4 3-2z" fill="#ccc"/>
<rect x="1897" y="166" width="13" height="14" fill="none" stroke="#ccc" stroke-width="1.300"/><path d="M1900 170h7M1900 173h7M1900 176h7" stroke="#ccc"/><path d="M1899 164v2M1902 164v2M1905 164v2M1908 164v2" stroke="#ccc" stroke-width=".8"/>
</g>

<!-- status bar -->
<rect y="981" width="1920" height="1" fill="#161616"/>
<rect y="982" width="1920" height="21" fill="#333"/>
<rect y="1003" width="1920" height="1" fill="#151515"/>
<text x="2" y="997" style="font-size:12px;fill:#e5a219" textLength="952" lengthAdjust="spacingAndGlyphs">[GPUIssuesCheck] The current TDR (GPU hang recovery) delay is low: 2s. Substance Painter can be interrupted by the OS when doing a long computation. See https://support.allegorithmic.com/do...</text>

<!-- dialog -->
<rect x="624.500" y="162.500" width="672" height="642" fill="#343434" stroke="#2a86de" stroke-width="1.500"/>
<rect x="625" y="163" width="671" height="37" fill="#fff"/>
<g>
<circle cx="642" cy="183" r="7.500" fill="none" stroke="#de2129" stroke-width="2"/>
<text x="642" y="187.500" class="mid" style="font-size:11px;font-weight:bold;fill:#de2129">S</text>
<circle cx="642" cy="173" r="1.300" fill="#de2129"/><circle cx="651" cy="191" r="1.800" fill="#de2129"/><circle cx="634" cy="190" r="1" fill="#de2129"/>
</g>
<text x="659" y="187" style="font-size:15px;fill:#222" textLength="111" lengthAdjust="spacingAndGlyphs">Import resources</text>
<text x="1208" y="187" class="mid" style="font-size:16px;fill:#222">?</text>
<path d="M1260 175l12 12M1272 175l-12 12" stroke="#222" stroke-width="1" fill="none"/>
<text x="649" y="241" class="b" style="fill:#c4c4c4" textLength="240" lengthAdjust="spacingAndGlyphs">Import your resources and set their usage</text>
<rect x="1022" y="224" width="90" height="24" fill="#3f3f3f"/>
<text x="1066" y="241" class="c mid" style="fill:#2288ee" textLength="69" lengthAdjust="spacingAndGlyphs">Add resources</text>
<rect x="1119" y="224" width="153" height="24" fill="#3f3f3f"/>
<text x="1261" y="241" class="c end" style="fill:#5a5a5a">Remove selected resources</text>
<rect x="649.500" y="255.500" width="622" height="19" fill="#262626" stroke="#505050"/>
<text x="656" y="270" class="c" style="fill:#b4b4b4" textLength="123" lengthAdjust="spacingAndGlyphs">All imported resources (0)</text>
<use href="#ch" x="1264" y="265"/>
<rect x="649" y="282" width="623" height="1.500" fill="#262626"/>
<text x="1021" y="743" class="b" style="fill:#c0c0c0" textLength="146" lengthAdjust="spacingAndGlyphs">Import your resources to:</text>
<rect x="1174.500" y="728.500" width="97" height="19" fill="#262626" stroke="#505050"/><use href="#ch" x="1264" y="738"/>
<text x="649" y="773" class="c" style="fill:#b0b0b0" textLength="232" lengthAdjust="spacingAndGlyphs">To add a new shelf, see the Edit / Settings menu</text>
<rect x="1045.500" y="755.500" width="109" height="25" fill="#474747" stroke="#eee"/>
<text x="1100" y="773" class="c mid" style="fill:#5e5e5e">Import</text>
<rect x="1162" y="755" width="110" height="26" fill="#4a4a4a"/>
<text x="1216" y="773" class="c mid" style="fill:#c4c4c4">Cancel</text>

<!-- red arrow -->
<path d="M1120 238L1149 211L1148.500 236L1213 236.500L1213 243L1148 241L1147 267z" fill="#fd6262"/>
</svg>
</body></html>
